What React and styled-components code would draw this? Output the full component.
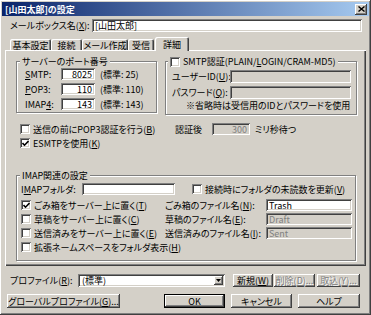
import React from 'react';
import styled, {createGlobalStyle, css} from 'styled-components';

const face = '#d4d0c8';

const GlobalStyle = createGlobalStyle`
	html, body {
		margin: 0;
		padding: 0;
		background: ${face};
	}
	body {
		font-family: "Noto Sans CJK JP", "Noto Sans", sans-serif;
		font-size: 9px;
		font-feature-settings: "palt";
		color: #000;
	}
	* {
		box-sizing: border-box;
	}
`;

const raised = css`
	box-shadow: inset -1px -1px #404040, inset 1px 1px #fff, inset -2px -2px #808080, inset 2px 2px ${face};
`;

const sunken = css`
	box-shadow: inset 1px 1px #808080, inset -1px -1px #fff, inset 2px 2px #404040, inset -2px -2px ${face};
`;

const Window = styled.div`
	width: 371px;
	height: 315px;
	padding: 2px;
	background: ${face};
	${raised}
	display: flex;
	flex-direction: column;
	line-height: 1;
`;

const TitleBar = styled.div`
	height: 14px;
	display: flex;
	align-items: center;
	padding: 0 2px 0 3px;
	background: linear-gradient(to right, #0a246a, #a6caf0);
	color: #fff;
	font-weight: bold;
`;

const CloseButton = styled.div`
	margin-left: auto;
	width: 12px;
	height: 11px;
	background: ${face};
	${raised}
	display: flex;
	align-items: center;
	justify-content: center;
`;

const Body = styled.div`
	padding: 0 3px;
	display: flex;
	flex-direction: column;
`;

const Row = styled.div`
	display: flex;
	align-items: center;
	height: ${p => p.$h || 12}px;
	margin-top: ${p => p.$mt || 0}px;
	margin-left: ${p => p.$ml || 0}px;
	flex-shrink: 0;
`;

const Label = styled.span`
	width: ${p => (p.$w ? `${p.$w}px` : 'auto')};
	margin-left: ${p => p.$ml || 0}px;
	white-space: nowrap;
	flex-shrink: 0;
`;

const TextBox = styled.div`
	width: ${p => p.$w}px;
	height: ${p => p.$h || 12}px;
	${sunken}
	background: ${p => (p.$disabled ? face : '#fff')};
	color: ${p => (p.$disabled ? '#808080' : '#000')};
	display: flex;
	align-items: center;
	justify-content: ${p => (p.$right ? 'flex-end' : 'flex-start')};
	padding: 0 3px;
	white-space: nowrap;
	flex-shrink: 0;
`;

const TabStrip = styled.div`
	display: flex;
	align-items: flex-end;
	height: 13px;
	margin-top: 5px;
	padding-left: 5px;
	position: relative;
	z-index: 1;
`;

const Tab = styled.div`
	width: ${p => p.$w}px;
	height: ${p => (p.$active ? 14 : 11)}px;
	margin-bottom: ${p => (p.$active ? -1 : 0)}px;
	margin-left: ${p => (p.$active ? 1 : 0)}px;
	background: ${face};
	border-radius: 2px 2px 0 0;
	box-shadow: inset 1px 1px #fff, inset -1px 0 #404040, inset -2px 0 #808080;
	display: flex;
	justify-content: center;
	padding-top: ${p => (p.$active ? 3 : 2)}px;
	white-space: nowrap;
`;

const Panel = styled.div`
	height: 216px;
	padding: 11px 0 0 11px;
	box-shadow: inset 1px 1px #fff, inset -1px -1px #404040, inset -2px -2px #808080;
	display: flex;
	flex-direction: column;
`;

const GroupPair = styled.div`
	display: flex;
	align-items: flex-start;
	gap: 8px;
	height: 54px;
`;

const Group = styled.div`
	position: relative;
	width: ${p => p.$w}px;
	height: ${p => p.$h}px;
	margin-top: ${p => p.$mt || 0}px;
	padding: ${p => p.$pad};
	border: 1px solid #808080;
	box-shadow: 1px 1px #fff, inset 1px 1px #fff;
	display: flex;
	flex-direction: column;
	flex-shrink: 0;
`;

const Legend = styled.div`
	position: absolute;
	top: -6px;
	left: ${p => p.$left || 3}px;
	height: 11px;
	padding: 0 2px;
	background: ${face};
	display: flex;
	align-items: center;
	gap: 3px;
	white-space: nowrap;
`;

const Box = styled.span`
	width: 10px;
	height: 10px;
	background: #fff;
	${sunken}
	display: inline-flex;
	align-items: center;
	justify-content: center;
	flex-shrink: 0;
`;

const Note = styled.div`
	height: 10px;
	margin: 2px 0 0 14px;
	white-space: nowrap;
`;

const Column = styled.div`
	width: ${p => p.$w}px;
	display: flex;
	align-items: center;
	gap: 3px;
	flex-shrink: 0;
	white-space: nowrap;
`;

const Button = styled.div`
	width: ${p => p.$w}px;
	height: ${p => p.$h || 14}px;
	margin-left: ${p => p.$ml || 0}px;
	background: ${face};
	${raised}
	border: ${p => (p.$default ? '1px solid #000' : 'none')};
	color: ${p => (p.$disabled ? '#808080' : '#000')};
	text-shadow: ${p => (p.$disabled ? '1px 1px #fff' : 'none')};
	display: flex;
	align-items: center;
	justify-content: center;
	white-space: nowrap;
	flex-shrink: 0;
`;

const Combo = styled.div`
	width: ${p => p.$w}px;
	height: 13px;
	${sunken}
	background: #fff;
	display: flex;
	align-items: center;
	padding: 2px;
	flex-shrink: 0;
`;

const ComboText = styled.span`
	flex: 1;
	padding-left: 2px;
`;

const ComboArrow = styled.span`
	width: 9px;
	height: 9px;
	background: ${face};
	${raised}
	display: flex;
	align-items: center;
	justify-content: center;
`;

function Check({checked}) {
	return (
		<Box>
			{checked && (
				<svg width="7" height="7" viewBox="0 0 7 7">
					<path d="M0.5 3 L2.5 5.2 L6.5 1" fill="none" stroke="#000" strokeWidth="1.6" />
				</svg>
			)}
		</Box>
	);
}

function CheckItem({checked, children}) {
	return (
		<>
			<Check checked={checked} />
			<span>{children}</span>
		</>
	);
}

export default function App() {
	return (
		<>
			<GlobalStyle />
			<Window>
				<TitleBar>
					<span>[山田太郎]の設定</span>
					<CloseButton>
						<svg width="7" height="6" viewBox="0 0 7 6">
							<path d="M0.5 0.5 L6.5 5.5 M6.5 0.5 L0.5 5.5" stroke="#000" strokeWidth="1.4" />
						</svg>
					</CloseButton>
				</TitleBar>
				<Body>
					<Row $h={13} $mt={3} $ml={5}>
						<Label $w={82}>メールボックス名(<u>X</u>):</Label>
						<TextBox $w={270} $h={13}>[山田太郎]</TextBox>
					</Row>

					<TabStrip>
						<Tab $w={41}>基本設定</Tab>
						<Tab $w={31}>接続</Tab>
						<Tab $w={46}>メール作成</Tab>
						<Tab $w={26}>受信</Tab>
						<Tab $w={34} $active>詳細</Tab>
					</TabStrip>

					<Panel>
						<GroupPair>
							<Group $w={141} $h={52} $pad="6px 0 0 8px">
								<Legend>サーバーのポート番号</Legend>
								<Row>
									<Label $w={36}><u>S</u>MTP:</Label>
									<TextBox $w={34} $right>8025</TextBox>
									<Label $ml={5}>(標準: 25)</Label>
								</Row>
								<Row $mt={3}>
									<Label $w={36}><u>P</u>OP3:</Label>
									<TextBox $w={34} $right>110</TextBox>
									<Label $ml={5}>(標準: 110)</Label>
								</Row>
								<Row $mt={3}>
									<Label $w={36}>IMAP<u>4</u>:</Label>
									<TextBox $w={34} $right>143</TextBox>
									<Label $ml={5}>(標準: 143)</Label>
								</Row>
							</Group>

							<Group $w={192} $h={54} $pad="8px 0 0 6px">
								<Legend $left={2}>
									<CheckItem>SMTP認証(PLAIN/<u>L</u>OGIN/CRAM-MD5)</CheckItem>
								</Legend>
								<Row $h={13}>
									<Label $w={58}>ユーザーID(<u>U</u>):</Label>
									<TextBox $w={121} $h={13} $disabled />
								</Row>
								<Row $h={13} $mt={3}>
									<Label $w={58}>パスワード(<u>Q</u>):</Label>
									<TextBox $w={121} $h={13} $disabled />
								</Row>
								<Note>※省略時は受信用のIDとパスワードを使用</Note>
							</Group>
						</GroupPair>

						<Row $mt={8} $ml={4}>
							<Column $w={155}>
								<CheckItem>送信の前にPOP3認証を行う(<u>B</u>)</CheckItem>
							</Column>
							<Label $w={37}>認証後</Label>
							<TextBox $w={38} $right $disabled>300</TextBox>
							<Label $ml={5}>ミリ秒待つ</Label>
						</Row>
						<Row $mt={2} $ml={4}>
							<Column $w={155}>
								<CheckItem checked>ESMTPを使用(<u>K</u>)</CheckItem>
							</Column>
						</Row>

						<Group $w={340} $h={86} $mt={26} $pad="7px 0 0 4px">
							<Legend>IMAP関連の設定</Legend>
							<Row>
								<Label $w={61}>I<u>M</u>APフォルダ:</Label>
								<TextBox $w={93} />
								<Column $w={160} style={{marginLeft: 17}}>
									<CheckItem>接続時にフォルダの未読数を更新(<u>V</u>)</CheckItem>
								</Column>
							</Row>
							<Row $h={14} $mt={3}>
								<Column $w={144}>
									<CheckItem checked>ごみ箱をサーバー上に置く(<u>T</u>)</CheckItem>
								</Column>
								<Label $w={101}>ごみ箱のファイル名(<u>N</u>):</Label>
								<TextBox $w={86}>Trash</TextBox>
							</Row>
							<Row $h={14}>
								<Column $w={144}>
									<CheckItem>草稿をサーバー上に置く(<u>C</u>)</CheckItem>
								</Column>
								<Label $w={101}>草稿のファイル名(<u>E</u>):</Label>
								<TextBox $w={86} $disabled>Draft</TextBox>
							</Row>
							<Row $h={14}>
								<Column $w={144}>
									<CheckItem>送信済みをサーバー上に置く(<u>E</u>)</CheckItem>
								</Column>
								<Label $w={101}>送信済みのファイル名(<u>I</u>):</Label>
								<TextBox $w={86} $disabled>Sent</TextBox>
							</Row>
							<Row $h={14}>
								<Column $w={200}>
									<CheckItem>拡張ネームスペースをフォルダ表示(<u>H</u>)</CheckItem>
								</Column>
							</Row>
						</Group>
					</Panel>

					<Row $h={13} $mt={8} $ml={5}>
						<Label $w={68}>プロファイル(<u>R</u>):</Label>
						<Combo $w={147}>
							<ComboText>(標準)</ComboText>
							<ComboArrow>
								<svg width="5" height="3" viewBox="0 0 5 3">
									<path d="M0 0 H5 L2.5 3 Z" fill="#000" />
								</svg>
							</ComboArrow>
						</Combo>
						<Button $w={40} $h={13} $ml={8}>新規(<u>W</u>)</Button>
						<Button $w={41} $h={13} $ml={1} $disabled>削除(D)...</Button>
						<Button $w={43} $h={13} $ml={2} $disabled>取込(Y)...</Button>
					</Row>

					<Row $h={14} $mt={7} $ml={2}>
						<Button $w={113}>グローバルプロファイル(<u>G</u>)...</Button>
						<Button $w={61} $ml={44} $default>OK</Button>
						<Button $w={61} $ml={6}>キャンセル</Button>
						<Button $w={62} $ml={6}>ヘルプ</Button>
					</Row>
				</Body>
			</Window>
		</>
	);
}
